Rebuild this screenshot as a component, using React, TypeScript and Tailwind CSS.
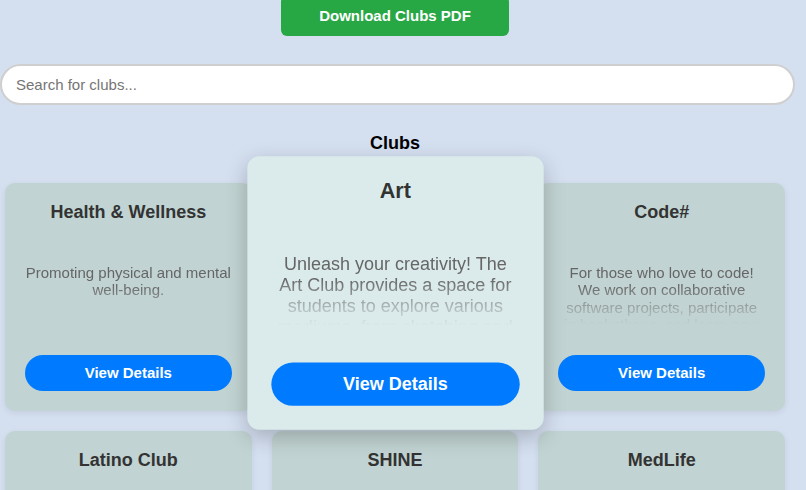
const clubs = [
  {
    name: "Health & Wellness",
    description: "Promoting physical and mental well-being.",
  },
  {
    name: "Art",
    description:
      "Unleash your creativity! The Art Club provides a space for students to explore various mediums, from sketching and painting to sculpture.",
  },
  {
    name: "Code#",
    description:
      "For those who love to code! We work on collaborative software projects, participate in hackathons, and learn new technologies together.",
  },
  {
    name: "Latino Club",
    description: "Celebrating Latino culture, heritage and community on campus.",
  },
  {
    name: "SHINE",
    description: "Students helping in the naturalization of elders through tutoring and mentoring.",
  },
  {
    name: "MedLife",
    description: "Medicine, education and development for low income families everywhere.",
  },
];

function ClubCard({ name, description, active }: { name: string; description: string; active?: boolean }) {
  return (
    <div
      className={
        active
          ? "relative z-10 flex h-[228px] -translate-y-1 scale-[1.2] flex-col rounded-[10px] bg-[#dbebeb] px-5 pt-[19px] pb-5 shadow-[0_6px_18px_rgba(0,0,0,0.22)]"
          : "relative flex h-[228px] flex-col rounded-[10px] bg-[#c1d3d2] px-5 pt-[19px] pb-5 shadow-[0_2px_6px_rgba(0,0,0,0.08)]"
      }
    >
      <h3 className="text-center text-[18px] leading-[20px] font-bold text-[#333]">{name}</h3>
      <p className="mt-[42px] h-[60px] overflow-hidden text-center text-[15px] leading-[17.25px] text-[#666] [-webkit-mask-image:linear-gradient(to_bottom,#000_35%,transparent)] [mask-image:linear-gradient(to_bottom,#000_35%,transparent)]">
        {description}
      </p>
      <button className="mt-auto h-9 w-full rounded-full bg-[#007bff] text-[15px] font-bold text-white">
        View Details
      </button>
    </div>
  );
}

export default function App() {
  return (
    <div className="min-h-screen overflow-hidden bg-[#d4dff0] font-['Liberation_Sans',Arial,sans-serif]">
      <div className="w-[790px]">
        <div className="-mt-1 flex justify-center">
          <button className="h-10 w-[228px] rounded-md bg-[#28a745] text-[15px] font-bold text-white">
            Download Clubs PDF
          </button>
        </div>

        <input
          type="text"
          placeholder="Search for clubs..."
          className="mt-7 h-[41px] w-[795px] rounded-full border-2 border-[#cfcfcf] bg-white pr-4 pl-[14px] text-[15px] outline-none placeholder:text-[#757575]"
        />

        <h2 className="mt-[25px] text-center text-[18px] font-bold text-black">Clubs</h2>

        <div className="mt-[26px] grid grid-cols-3 gap-5 px-[5px]">
          {clubs.map((c) => (
            <ClubCard key={c.name} name={c.name} description={c.description} active={c.name === "Art"} />
          ))}
        </div>
      </div>
    </div>
  );
}
